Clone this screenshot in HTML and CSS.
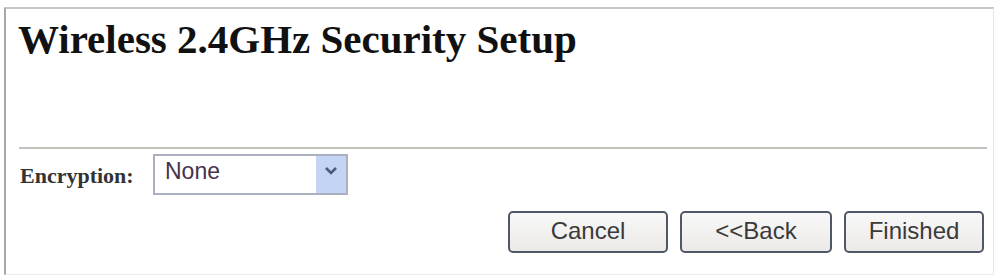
FILE: index.html
```html
<!DOCTYPE html>
<html>
<head>
<meta charset="utf-8">
<link rel="stylesheet" href="styles.css">
</head>
<body>
<div class="frame">
  <h1 class="title">Wireless 2.4GHz Security Setup</h1>
  <div class="rule"></div>
  <div class="row">
    <span class="label">Encryption:</span>
    <div class="select">
      <span class="value">None</span>
      <span class="arrow"><svg width="14" height="10" viewBox="0 0 14 10"><path d="M2 2 L7 7 L12 2" fill="none" stroke="#4a5a7a" stroke-width="2.6"/></svg></span>
    </div>
  </div>
  <div class="buttons">
    <button class="btn b1">Cancel</button>
    <button class="btn b2">&lt;&lt;Back</button>
    <button class="btn b3">Finished</button>
  </div>
</div>
</body>
</html>
```
FILE: styles.css
```css
html, body { margin: 0; padding: 0; background: #fff; }
body { width: 1000px; height: 279px; overflow: hidden; }
.frame {
  margin: 7px 0 0 4px;
  width: 990px;
  height: 268px;
  border-top: 2px solid #c8c8c8;
  border-left: 2px solid #a8a8a8;
  border-right: 1px solid #e6e6e6;
  border-bottom: 1px solid #ececec;
  box-sizing: border-box;
  padding: 0 0 0 13px;
}
.title {
  margin: 0;
  padding-top: 7px;
  font-family: "Liberation Serif", serif;
  font-weight: bold;
  font-size: 41px;
  line-height: 46px;
  color: #111;
  margin-left: -1px;
}
.rule {
  margin-top: 85px;
  width: 968px;
  height: 2px;
  background: #c4c0bc;
}
.row {
  display: flex;
  align-items: center;
  margin-top: 4px;
  margin-left: 1px;
  height: 42px;
}
.label {
  font-family: "Liberation Serif", serif;
  font-weight: bold;
  font-size: 22px;
  color: #333;
  width: 133px;
  padding-top: 4px;
}
.select {
  width: 195px;
  height: 41px;
  box-sizing: border-box;
  border: 2px solid #aab0c0;
  display: flex;
  align-items: center;
  justify-content: space-between;
}
.value {
  font-family: "Liberation Sans", sans-serif;
  font-size: 23px;
  color: #44334a;
  padding-left: 10px;
  padding-bottom: 6px;
}
.arrow {
  width: 30px;
  height: 100%;
  background: #c4d4f4;
  display: flex;
  align-items: center;
  justify-content: center;
  padding-bottom: 6px;
  box-sizing: border-box;
}
.buttons {
  display: flex;
  justify-content: flex-end;
  gap: 12px;
  margin-top: 16px;
  margin-right: 9px;
}
.btn {
  height: 42px;
  box-sizing: border-box;
  border: 2px solid #505868;
  border-radius: 5px;
  background: linear-gradient(#f8f8f8, #eceae8);
  font-family: "Liberation Sans", sans-serif;
  font-size: 24px;
  color: #3a3a3a;
  padding: 0 0 3px 0;
}
.b1 { width: 160px; }
.b2 { width: 152px; }
.b3 { width: 140px; }
```
